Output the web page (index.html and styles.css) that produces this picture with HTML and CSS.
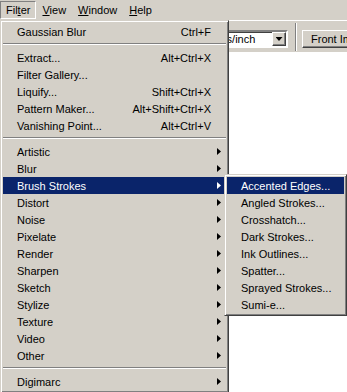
FILE: index.html
```html
<!DOCTYPE html>
<html lang="en">
<head>
	<meta charset="UTF-8">
	<title>Filter menu</title>
	<link rel="stylesheet" href="styles.css">
</head>
<body>
<div class="app">
	<nav class="menubar">
		<span class="mb-item open">Fil<u>t</u>er</span>
		<span class="mb-item"><u>V</u>iew</span>
		<span class="mb-item"><u>W</u>indow</span>
		<span class="mb-item"><u>H</u>elp</span>
	</nav>

	<div class="optbar">
		<div class="combo">
			<span class="combo-text">pixels/inch</span>
			<span class="combo-btn"><span class="down"></span></span>
		</div>
		<span class="vsep"></span>
		<span class="btn">Front Image</span>
	</div>

	<!-- the open Filter menu -->
	<div class="menu filter-menu">
		<div class="item"><span class="label">Gaussian Blur</span><span class="key">Ctrl+F</span></div>
		<div class="sep"></div>
		<div class="item"><span class="label">Extract...</span><span class="key">Alt+Ctrl+X</span></div>
		<div class="item"><span class="label">Filter Gallery...</span></div>
		<div class="item"><span class="label">Liquify...</span><span class="key">Shift+Ctrl+X</span></div>
		<div class="item"><span class="label">Pattern Maker...</span><span class="key">Alt+Shift+Ctrl+X</span></div>
		<div class="item"><span class="label">Vanishing Point...</span><span class="key">Alt+Ctrl+V</span></div>
		<div class="sep"></div>
		<div class="item"><span class="label">Artistic</span><span class="arrow"></span></div>
		<div class="item"><span class="label">Blur</span><span class="arrow"></span></div>
		<div class="item active"><span class="label">Brush Strokes</span><span class="arrow"></span></div>
		<div class="item"><span class="label">Distort</span><span class="arrow"></span></div>
		<div class="item"><span class="label">Noise</span><span class="arrow"></span></div>
		<div class="item"><span class="label">Pixelate</span><span class="arrow"></span></div>
		<div class="item"><span class="label">Render</span><span class="arrow"></span></div>
		<div class="item"><span class="label">Sharpen</span><span class="arrow"></span></div>
		<div class="item"><span class="label">Sketch</span><span class="arrow"></span></div>
		<div class="item"><span class="label">Stylize</span><span class="arrow"></span></div>
		<div class="item"><span class="label">Texture</span><span class="arrow"></span></div>
		<div class="item"><span class="label">Video</span><span class="arrow"></span></div>
		<div class="item"><span class="label">Other</span><span class="arrow"></span></div>
		<div class="sep"></div>
		<div class="item"><span class="label">Digimarc</span><span class="arrow"></span></div>
	</div>

	<!-- Brush Strokes submenu -->
	<div class="menu submenu">
		<div class="item active"><span class="label">Accented Edges...</span></div>
		<div class="item"><span class="label">Angled Strokes...</span></div>
		<div class="item"><span class="label">Crosshatch...</span></div>
		<div class="item"><span class="label">Dark Strokes...</span></div>
		<div class="item"><span class="label">Ink Outlines...</span></div>
		<div class="item"><span class="label">Spatter...</span></div>
		<div class="item"><span class="label">Sprayed Strokes...</span></div>
		<div class="item"><span class="label">Sumi-e...</span></div>
	</div>
</div>
</body>
</html>
```

FILE: styles.css
```css
body{
	margin: 0;
	background: #fff;
	font-family: "Liberation Sans", Arial, sans-serif;
	font-size: 11px;
	color: #000;
}

.app{
	position: relative;
	width: 347px;
	height: 392px;
	overflow: hidden;
}

/* top menu bar */
.menubar{
	display: flex;
	height: 20px;
	background: #d4d0c8;
}

.mb-item{
	margin-top: 1px;
	height: 16px;
	line-height: 16px;
	padding: 0 5px;
	border: 1px solid transparent;
}

.mb-item.open{
	border-color: #808080 #fff #fff #808080;
}

/* tool options bar */
.optbar{
	display: flex;
	align-items: flex-start;
	padding: 9px 0 0 198px;
	box-sizing: border-box;
	height: 32px;
	background: #d4d0c8;
	border-top: 1px solid #fff;
}

.optbar > *{
	flex-shrink: 0;
}

.combo{
	display: flex;
	width: 86px;
	height: 14px;
	border: 2px solid;
	border-color: #808080 #fff #fff #808080;
	box-shadow: inset 1px 1px #404040;
	background: #fff;
}

.combo-text{
	flex: 1;
	padding-left: 4px;
	line-height: 14px;
}

.combo-btn{
	display: flex;
	align-items: center;
	justify-content: center;
	width: 12px;
	height: 12px;
	border: 1px solid;
	border-color: #fff #404040 #404040 #fff;
	box-shadow: inset -1px -1px #808080;
	background: #d4d0c8;
}

.down{
	width: 7px;
	height: 4px;
	background: #000;
	clip-path: polygon(0 0, 100% 0, 50% 100%);
}

.vsep{
	width: 0;
	height: 28px;
	margin: -7px 5px 0 7px;
	border-left: 1px solid #808080;
	border-right: 1px solid #fff;
}

.btn{
	height: 16px;
	line-height: 16px;
	padding: 0 8px;
	border: 1px solid;
	border-color: #fff #404040 #404040 #fff;
	box-shadow: inset -1px -1px #808080;
	white-space: nowrap;
}

/* drop down menus */
.menu{
	position: absolute;
	padding: 2px;
	background: #d4d0c8;
	border: 1px solid;
	border-color: #d4d0c8 #404040 #404040 #d4d0c8;
	box-shadow: inset 1px 1px #fff, inset -1px -1px #808080;
}

.filter-menu{
	left: 0;
	top: 20px;
	width: 223px;
}

.submenu{
	left: 224px;
	top: 174px;
	width: 117px;
}

.item{
	display: flex;
	align-items: center;
	height: 17px;
	padding: 0 5px 0 14px;
	white-space: nowrap;
}

.item.active{
	background: #0a246a;
	color: #fff;
}

.label{
	flex: 1;
}

.key{
	margin-right: 10px;
}

.arrow{
	width: 4px;
	height: 7px;
	background: currentColor;
	clip-path: polygon(0 0, 100% 50%, 0 100%);
}

.sep{
	height: 0;
	margin: 3px 0 4px;
	border-top: 1px solid #808080;
	border-bottom: 1px solid #fff;
}
```
